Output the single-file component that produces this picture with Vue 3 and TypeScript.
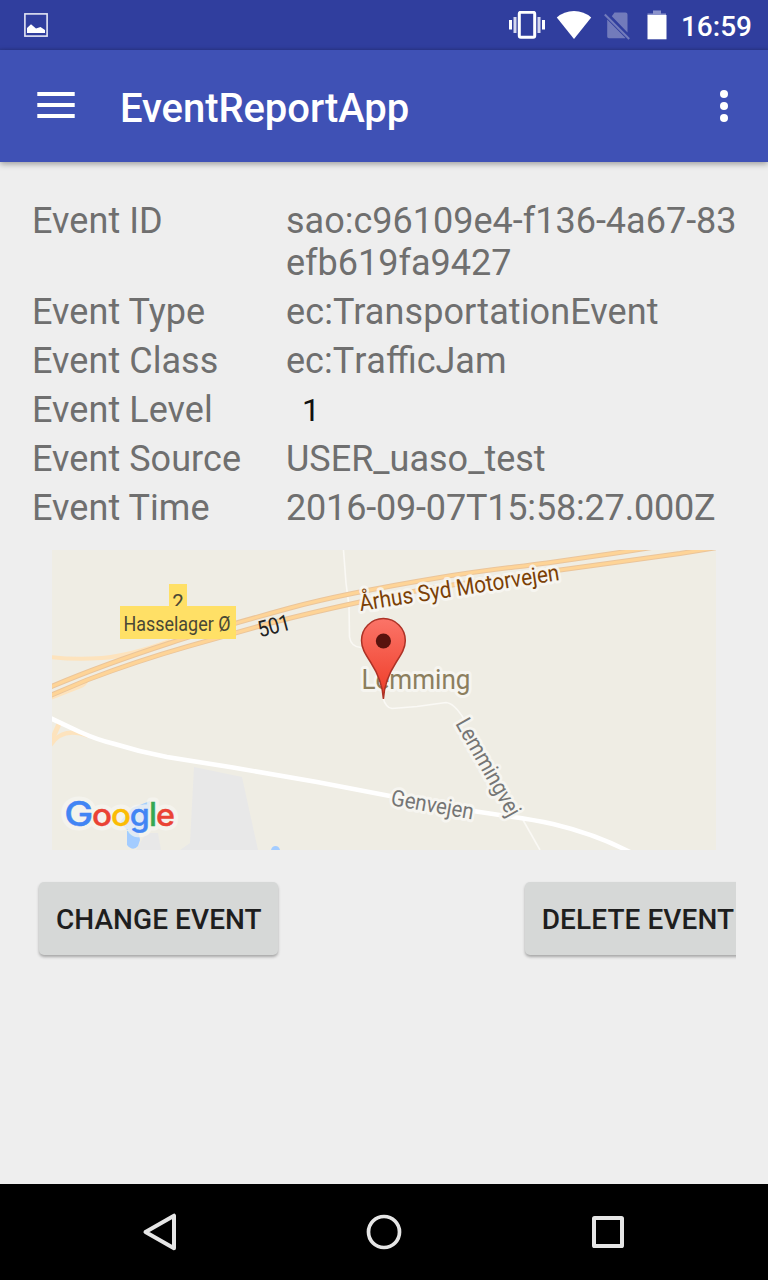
<script setup lang="ts">
interface Field {
  label: string
  lines: string[]
  kind?: string
}

interface LogoLetter {
  char: string
  x: number
  width: number
  size: number
  color: string
}

const fields: Field[] = [
  { label: 'Event ID', lines: ['sao:c96109e4-f136-4a67-83', 'efb619fa9427'] },
  { label: 'Event Type', lines: ['ec:TransportationEvent'], kind: 'type' },
  { label: 'Event Class', lines: ['ec:TrafficJam'], kind: 'class' },
  { label: 'Event Level', lines: ['1'], kind: 'spinner' },
  { label: 'Event Source', lines: ['USER_uaso_test'] },
  { label: 'Event Time', lines: ['2016-09-07T15:58:27.000Z'], kind: 'time' },
]

const logo: LogoLetter[] = [
  { char: 'G', x: 64.3, width: 29, size: 34.5, color: '#4285f4' },
  { char: 'o', x: 92, width: 20, size: 31.5, color: '#ea4335' },
  { char: 'o', x: 111, width: 20, size: 31.5, color: '#fbbc05' },
  { char: 'g', x: 129.8, width: 20, size: 31.5, color: '#4285f4' },
  { char: 'l', x: 148.9, width: 8, size: 32.5, color: '#34a853' },
  { char: 'e', x: 156, width: 19, size: 31.5, color: '#ea4335' },
]

const upperLane =
  'M48 688 C90 670 130 656 170 643 S250 619 290 608 S383 587 437 578 S510 568 547 563 L613 553.5 L655 547'
const lowerLane =
  'M48 696.5 L87 680 Q137 661 187 646.7 T260 626 Q300 615 360 602 T480 581 L560 570 L613 562.7 L680 553.5 L720 547'
</script>

<template>
  <div class="screen">
    <header class="status">
      <svg class="shot" width="24" height="24" viewBox="0 0 24 24">
        <rect x="0.9" y="0.9" width="22.2" height="22.2" fill="none" stroke="#e4e6f4" stroke-width="1.6" />
        <path d="M3 20V15L7 11.300L12 15.500L16.500 14L21 17V20Z" fill="#fff" />
      </svg>
      <div class="indicators">
        <svg class="vibrate" width="36" height="28" viewBox="0 0 36 28">
          <rect x="10.300" y="1.300" width="15.400" height="25" rx="1.500" fill="none" stroke="#fff" stroke-width="3" />
          <path d="M1.500 9v9.500M34.500 9v9.500" stroke="#fff" stroke-width="3" />
          <path d="M6 6v16M30 6v16" stroke="#d5d8ee" stroke-width="3" />
        </svg>
        <svg class="wifi" width="36" height="28" viewBox="0 0 36 28">
          <path d="M0.800 6.500Q8 0 18 0T35.200 6.500L18 28Z" fill="#fff" />
        </svg>
        <svg class="sim" width="26" height="28" viewBox="0 0 26 28">
          <path d="M10.500 0.500H21.500Q23.500 0.500 23.500 2.500V20.500L7.800 4.300Z M3.200 7.500L21.500 26Q21 26.300 20 26.300H5Q3.200 26.300 3.200 24.500Z" fill="#727bbb" />
          <path d="M0.800 2.500L25.200 27" stroke="#727bbb" stroke-width="2" />
        </svg>
        <svg class="battery" width="20" height="30" viewBox="0 0 20 30">
          <path d="M6 0.500h8v3h5v2H0.500v-2H6z" fill="#8b93cb" />
          <rect x="0.500" y="5" width="19" height="24.300" fill="#fff" />
        </svg>
        <time class="clock">16:59</time>
      </div>
    </header>

    <div class="appbar">
      <svg class="menu" width="38" height="27" viewBox="0 0 38 27">
        <path d="M0.300 2H37.700M0.300 13H37.700M0.300 24H37.700" stroke="#fff" stroke-width="4" />
      </svg>
      <h1 class="title">EventReportApp</h1>
      <svg class="more" width="8" height="32" viewBox="0 0 8 32">
        <circle cx="4" cy="4" r="4" fill="#fff" />
        <circle cx="4" cy="16" r="4" fill="#fff" />
        <circle cx="4" cy="28" r="4" fill="#fff" />
      </svg>
    </div>

    <main class="content">
      <dl class="fields">
        <div v-for="f in fields" :key="f.label" class="row">
          <dt>{{ f.label }}</dt>
          <dd :class="f.kind">
            <div v-for="line in f.lines" :key="line">{{ line }}</div>
          </dd>
        </div>
      </dl>

      <svg class="map" width="664" height="300" viewBox="52 550 664 300">
        <rect x="52" y="550" width="664" height="300" fill="#efede4" />
        <path d="M194 767L242 777L258 850H180L190 843Z" fill="#e8e8e8" />
        <path d="M146 833H158L161 850H136Z" fill="#e8e8e8" />
        <path d="M127 831L138 828L140 840L138 846Q133 852 127 845Z" fill="#a3ccff" />
        <path d="M120 822L132 808L150 801L148 828L138 832L127 830Z" fill="#a3ccff" />
        <path d="M271 850Q272 846 275.500 846T280 850Z" fill="#a3ccff" />

        <g fill="none" stroke="#faf9f5" stroke-width="1.600">
          <path d="M343.500 550L346 583L349 606L349.500 637Q351 647 361 647.500" />
          <path d="M383 698Q386 708 392 708.500L417 706.500L446 702.500Q454 703 464 719" />
          <path d="M523 820L540 850" />
        </g>

        <g fill="none" stroke="#fde3bd" stroke-width="4">
          <path d="M50 657Q75 660 102 658T170 641" />
          <path d="M50 698L80 686.500Q85 684 87 680" />
          <path d="M59 724L50 744" stroke-width="5" />
          <path d="M88 736Q62 726 50 746" />
        </g>
        <g fill="none" stroke="#ebc59a" stroke-width="5">
          <path :d="upperLane" />
          <path :d="lowerLane" />
        </g>
        <g fill="none" stroke="#fed497" stroke-width="3">
          <path :d="upperLane" />
          <path :d="lowerLane" />
        </g>
        <path
          d="M48 717L80 732Q98 740 113 743.500Q140 752 167 757L233 767.500L317 782L390 796L473 811L510 816.500Q535 820 553 824Q595 834 630 852"
          fill="none" stroke="#fff" stroke-width="4.600"
        />

        <rect x="169" y="584" width="18" height="22" fill="#ffe066" />
        <text x="178" y="609" font-size="20.500" text-anchor="middle" fill="#4a4835">2</text>
        <rect x="120" y="606" width="116" height="33" fill="#ffe066" />
        <text x="123.500" y="630.700" font-size="20.500" textLength="107" lengthAdjust="spacingAndGlyphs" fill="#4a4835">Hasselager Ø</text>

        <text transform="translate(260 637.600) rotate(-15)" font-size="22.500" textLength="33" lengthAdjust="spacingAndGlyphs" fill="#222">501</text>
        <g class="halo">
          <text transform="translate(360.500 611) rotate(-8.800)" font-size="23" textLength="202" lengthAdjust="spacingAndGlyphs" fill="#7b3f05">Århus Syd Motorvejen</text>
          <text x="361.500" y="689.300" font-size="27" textLength="109" lengthAdjust="spacingAndGlyphs" fill="#8c7f5e">Lemming</text>
          <text transform="translate(390 805) rotate(10)" font-size="22.500" textLength="83.500" lengthAdjust="spacingAndGlyphs" fill="#757575">Genvejen</text>
          <text transform="translate(455 723.500) rotate(60.500)" font-size="22.500" textLength="109" lengthAdjust="spacingAndGlyphs" fill="#757575">Lemmingvej</text>
        </g>

        <defs>
          <linearGradient id="pin" x1="0" y1="0" x2="0" y2="1">
            <stop offset="0" stop-color="#fb7468" />
            <stop offset="1" stop-color="#ee3b26" />
          </linearGradient>
        </defs>
        <path
          d="M383.400 699C382.500 683 377 672 370.500 662C365 653.500 361.500 648 361.500 640.500A21.900 21.900 0 0 1 405.300 640.500C405.300 648 401.800 653.500 396.300 662C389.800 672 384.300 683 383.400 699Z"
          fill="url(#pin)" stroke="#ad3226" stroke-width="1.500"
        />
        <circle cx="383.400" cy="641" r="7.600" fill="#59130e" />

        <g class="logo">
          <g class="glow" aria-hidden="true">
            <text v-for="l in logo" :key="l.x" :x="l.x" y="825.700" :font-size="l.size" :textLength="l.width" lengthAdjust="spacingAndGlyphs">{{ l.char }}</text>
          </g>
          <g class="ink">
            <text v-for="l in logo" :key="l.x" :x="l.x" y="825.700" :font-size="l.size" :textLength="l.width" lengthAdjust="spacingAndGlyphs" :fill="l.color" :stroke="l.color">{{ l.char }}</text>
          </g>
        </g>
      </svg>

      <div class="actions">
        <button class="btn" type="button">CHANGE EVENT</button>
        <button class="btn" type="button">DELETE EVENT</button>
      </div>
    </main>

    <nav class="navbar">
      <svg width="38" height="40" viewBox="0 0 38 40">
        <path d="M4.500 20L33 3.700V36.300Z" fill="none" stroke="#e6e6e6" stroke-width="4" stroke-linejoin="round" />
      </svg>
      <svg width="38" height="40" viewBox="0 0 38 40">
        <circle cx="19" cy="20" r="15.500" fill="none" stroke="#e6e6e6" stroke-width="3.700" />
      </svg>
      <svg width="38" height="40" viewBox="0 0 38 40">
        <rect x="5" y="6" width="28" height="28" rx="0.600" fill="none" stroke="#e6e6e6" stroke-width="4" stroke-linejoin="round" />
      </svg>
    </nav>
  </div>
</template>

<style>
body {
  margin: 0;
}
</style>

<style scoped>
.screen {
  width: 768px;
  height: 1280px;
  display: flex;
  flex-direction: column;
  overflow: hidden;
  background: #eee;
  font-family: Roboto, 'Noto Sans', sans-serif;
}
svg {
  display: block;
  flex: none;
}
.status {
  height: 50px;
  box-sizing: border-box;
  padding: 0 16px 0 24px;
  display: flex;
  align-items: center;
  justify-content: space-between;
  background: linear-gradient(#303e9e 47px, #2c3992);
}
.indicators {
  display: flex;
  align-items: center;
  color: #fff;
}
.wifi {
  margin-left: 11px;
}
.sim {
  margin: 2px 0 0 12px;
}
.battery {
  margin: 0 0 0 17px;
}
.clock {
  margin: 3px 0 0 14px;
  font-size: 28px;
  font-weight: 500;
  line-height: 34px;
}
.appbar {
  position: relative;
  height: 112px;
  box-sizing: border-box;
  padding: 0 40px 0 37px;
  display: flex;
  align-items: center;
  background: #3f51b5;
  box-shadow: 0 2px 6px rgba(0, 0, 0, 0.35);
  color: #fff;
}
.menu {
  margin-top: -1px;
}
.title {
  flex: 1;
  margin: 6px 0 0 45px;
  font-size: 40px;
  font-weight: 500;
  line-height: 48px;
  letter-spacing: -0.06px;
}
.content {
  flex: 1;
  padding: 38px 32px 0;
}
.fields {
  margin: 0;
  display: flex;
  flex-direction: column;
  gap: 7px;
  font-size: 36px;
  line-height: 42px;
  color: #6f6f6f;
}
.row {
  display: grid;
  grid-template-columns: 254px 1fr;
  white-space: nowrap;
}
dt {
  letter-spacing: 0.05px;
}
dd {
  margin: 0;
}
.type {
  letter-spacing: 0.1px;
}
.class {
  font-kerning: none;
}
.time {
  letter-spacing: -0.18px;
}
.spinner {
  padding-left: 16px;
  font-size: 32px;
  line-height: 42px;
  height: 42px;
  color: #111;
}
.map {
  margin: 21px 0 0 20px;
}
.halo text {
  stroke: rgba(248, 247, 243, 0.85);
  stroke-width: 6px;
  stroke-linejoin: round;
  paint-order: stroke;
}
.logo {
  font-family: Inter, sans-serif;
  font-weight: 500;
}
.glow {
  fill: #f6f5f1;
  stroke: #f6f5f1;
  stroke-width: 9px;
  stroke-linejoin: round;
  opacity: 0.75;
}
.ink {
  stroke-width: 0.4px;
}
.actions {
  display: flex;
  gap: 247px;
  height: 90px;
  box-sizing: border-box;
  margin-top: 24px;
  padding: 8px 0 0 7.4px;
  overflow: hidden;
}
.btn {
  flex: none;
  height: 73px;
  padding: 2px 16.5px 0;
  border: 0;
  border-radius: 5px;
  background: #d6d8d7;
  box-shadow: 0 2px 3px rgba(0, 0, 0, 0.3);
  color: #1e1e1e;
  font: 500 28px/71px Roboto, sans-serif;
  letter-spacing: 0.08px;
  white-space: nowrap;
}
.navbar {
  height: 96px;
  display: flex;
  align-items: center;
  justify-content: center;
  gap: 186px;
  background: #000;
}
</style>
